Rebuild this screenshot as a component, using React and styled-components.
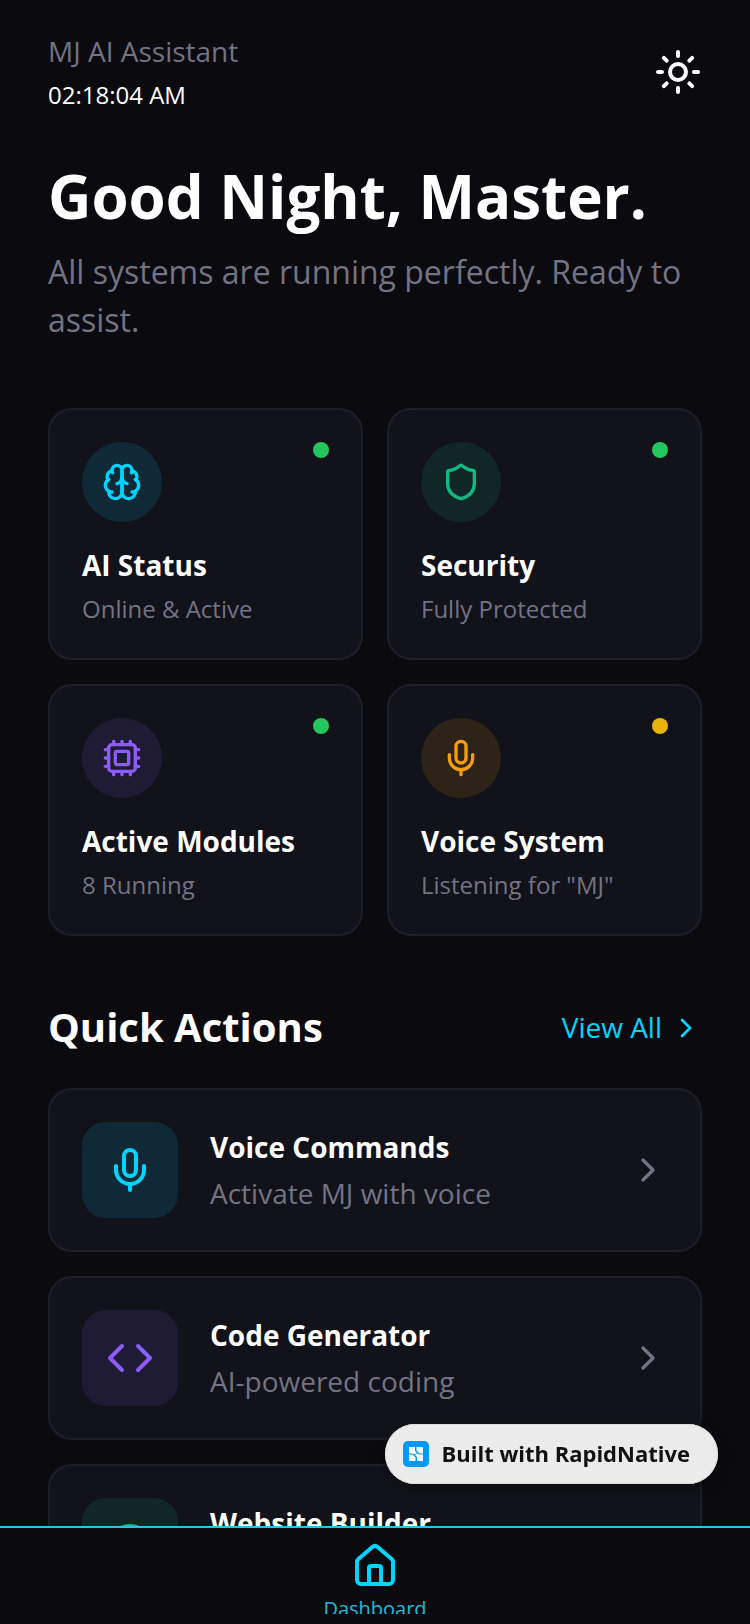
import React from 'react'
import styled, { createGlobalStyle } from 'styled-components'
import {
	Sun,
	Shield,
	Cpu,
	Mic,
	Code,
	Globe,
	House,
	ChevronRight
} from 'lucide-react'

const GlobalStyle = createGlobalStyle`
	* {
		box-sizing: border-box;
	}

	body {
		margin: 0;
		background: #0a0a0f;
		color: #ffffff;
		font-family: "Open Sans", "Noto Sans", sans-serif;
	}

	h1, h2, h3, p {
		margin: 0;
	}

	button {
		font: inherit;
		color: inherit;
		border: 0;
		padding: 0;
		background: none;
		cursor: pointer;
	}
`

const BrainIcon = ({ size = 40 }) => (
	<svg
		width={size}
		height={size}
		viewBox="0 0 24 24"
		fill="none"
		stroke="currentColor"
		strokeWidth="2"
		strokeLinecap="round"
		strokeLinejoin="round"
	>
		<path d="M12 5a3 3 0 1 0-5.997.125 4 4 0 0 0-2.526 5.77 4 4 0 0 0 .556 6.588A4 4 0 1 0 12 18Z" />
		<path d="M12 5a3 3 0 1 1 5.997.125 4 4 0 0 1 2.526 5.77 4 4 0 0 1-.556 6.588A4 4 0 1 1 12 18Z" />
		<path d="M15 13a4.5 4.5 0 0 1-3-4 4.5 4.5 0 0 1-3 4" />
		<path d="M17.599 6.5a3 3 0 0 0 .399-1.375" />
		<path d="M6.003 5.125A3 3 0 0 0 6.401 6.5" />
		<path d="M3.477 10.896a4 4 0 0 1 .585-.396" />
		<path d="M19.938 10.5a4 4 0 0 1 .585.396" />
		<path d="M6 18a4 4 0 0 1-1.967-.516" />
		<path d="M19.967 17.484A4 4 0 0 1 18 18" />
	</svg>
)

const RapidLogo = () => (
	<svg width="26" height="26" viewBox="0 0 26 26">
		<rect width="26" height="26" rx="5" fill="#0099ff" />
		<path
			fill="#ffffff"
			d="M6 6h6v5l-2 1.500H6zM13.500 6H20v6.500h-4l-2.500-3zM6 13.500h4l2.500 3V20H6zM14 20v-4.500l2-2h4V20zM12 10l4 3-2 3-4-3z"
		/>
		<path fill="#0099ff" d="M13.500 9.500 16.500 13h-3zM12.500 16.500 9.500 13h3z" />
	</svg>
)

const statuses = [
	{ title: 'AI Status', text: 'Online & Active', icon: BrainIcon, color: '#00d4ff', dot: '#22c55e' },
	{ title: 'Security', text: 'Fully Protected', icon: Shield, color: '#10b981', dot: '#22c55e' },
	{ title: 'Active Modules', text: '8 Running', icon: Cpu, color: '#8b5cf6', dot: '#22c55e' },
	{ title: 'Voice System', text: 'Listening for "MJ"', icon: Mic, color: '#f59e0b', dot: '#eab308' }
]

const actions = [
	{ title: 'Voice Commands', text: 'Activate MJ with voice', icon: Mic, color: '#00d4ff' },
	{ title: 'Code Generator', text: 'AI-powered coding', icon: Code, color: '#8b5cf6' },
	{ title: 'Website Builder', text: 'Create websites instantly', icon: Globe, color: '#10b981' }
]

const App = () => (
	<Screen>
		<GlobalStyle />
		<Content>
			<Header>
				<div>
					<AppName>MJ AI Assistant</AppName>
					<Time>02:18:04 AM</Time>
				</div>
				<ThemeButton aria-label="Toggle theme">
					<Sun size={48} />
				</ThemeButton>
			</Header>
			<Greeting>Good Night, Master.</Greeting>
			<Intro>All systems are running perfectly. Ready to assist.</Intro>
			<StatusGrid>
				{statuses.map(({ title, text, icon: Icon, color, dot }) => (
					<Card key={title}>
						<CardTop>
							<Circle $color={color}>
								<Icon size={40} />
							</Circle>
							<Dot $color={dot} />
						</CardTop>
						<CardTitle>{title}</CardTitle>
						<CardText>{text}</CardText>
					</Card>
				))}
			</StatusGrid>
			<SectionHeader>
				<SectionTitle>Quick Actions</SectionTitle>
				<ViewAll href="#actions">
					<ViewAllText>View All</ViewAllText>
					<ChevronRight size={32} />
				</ViewAll>
			</SectionHeader>
			<ActionList id="actions">
				{actions.map(({ title, text, icon: Icon, color }) => (
					<Action key={title}>
						<Tile $color={color}>
							<Icon size={48} />
						</Tile>
						<ActionBody>
							<ActionTitle>{title}</ActionTitle>
							<ActionText>{text}</ActionText>
						</ActionBody>
						<Arrow size={40} />
					</Action>
				))}
			</ActionList>
		</Content>
		<Badge href="#rapidnative">
			<RapidLogo />
			<BadgeText>Built with RapidNative</BadgeText>
		</Badge>
		<TabBar>
			<Tab href="#dashboard">
				<House size={48} />
				<TabLabel>Dashboard</TabLabel>
			</Tab>
		</TabBar>
	</Screen>
)

const Screen = styled.div`
	display: flex;
	flex-direction: column;
	height: 100vh;
	overflow: hidden;
`

const Content = styled.main`
	flex: 1;
	min-height: 0;
	overflow: hidden;
	padding: 32px 48px 0;
`

const Header = styled.header`
	display: flex;
	align-items: center;
	justify-content: space-between;
	margin-bottom: 48px;
`

const AppName = styled.p`
	padding-bottom: 10px;
	font-size: 28px;
	line-height: 38px;
	color: #737384;
`

const Time = styled.p`
	padding-bottom: 2px;
	font-size: 24px;
	line-height: 30px;
`

const ThemeButton = styled.button`
	display: flex;
`

const Greeting = styled.h1`
	font-size: 60px;
	line-height: 72px;
	font-weight: 700;
`

const Intro = styled.p`
	padding-top: 16px;
	font-size: 32px;
	line-height: 48px;
	color: #737384;
`

const StatusGrid = styled.section`
	display: grid;
	grid-template-columns: 1fr 1fr;
	gap: 24px;
	padding: 64px 0;
`

const Card = styled.article`
	padding: 32px;
	border: 2px solid #1e1e2a;
	border-radius: 24px;
	background: #12121a;
`

const CardTop = styled.div`
	display: flex;
	align-items: flex-start;
	justify-content: space-between;
	margin-bottom: 24px;
`

const Circle = styled.div`
	display: flex;
	align-items: center;
	justify-content: center;
	width: 80px;
	height: 80px;
	border-radius: 50%;
	color: ${({ $color }) => $color};
	background: ${({ $color }) => $color}20;
`

const Tile = styled(Circle)`
	flex: none;
	width: 96px;
	height: 96px;
	border-radius: 24px;
`

const Dot = styled.span`
	width: 16px;
	height: 16px;
	border-radius: 50%;
	background: ${({ $color }) => $color};
`

const CardTitle = styled.h3`
	padding-bottom: 10px;
	font-size: 28px;
	line-height: 38px;
	font-weight: 700;
`

const CardText = styled.p`
	padding-bottom: 2px;
	font-size: 24px;
	line-height: 30px;
	color: #737384;
`

const SectionHeader = styled.div`
	display: flex;
	align-items: center;
	justify-content: space-between;
	margin-bottom: 32px;
`

const SectionTitle = styled.h2`
	padding-bottom: 2px;
	font-size: 40px;
	line-height: 54px;
	font-weight: 700;
`

const ViewAll = styled.a`
	display: flex;
	align-items: center;
	gap: 8px;
	color: #00d4ff;
	text-decoration: none;
`

const ViewAllText = styled.span`
	padding-bottom: 2px;
	font-size: 28px;
	line-height: 38px;
`

const ActionList = styled.div`
	display: flex;
	flex-direction: column;
	gap: 24px;
`

const Action = styled.button`
	display: flex;
	align-items: center;
	gap: 32px;
	padding: 32px;
	border: 2px solid #1e1e2a;
	border-radius: 24px;
	background: #12121a;
	text-align: left;
`

const ActionBody = styled.span`
	display: flex;
	flex: 1;
	flex-direction: column;
	gap: 6px;
`

const ActionTitle = styled.span`
	font-size: 28px;
	line-height: 40px;
	font-weight: 700;
`

const ActionText = styled.span`
	font-size: 28px;
	line-height: 40px;
	color: #737384;
`

const Arrow = styled(ChevronRight)`
	color: #737384;
`

const Badge = styled.a`
	position: fixed;
	right: 32px;
	bottom: 140px;
	display: flex;
	align-items: center;
	gap: 12px;
	height: 60px;
	padding: 0 28px 0 18px;
	border-radius: 30px;
	background: #ebebeb;
	box-shadow: inset 0 0 0 1px #dedede, 0 4px 16px rgba(0, 0, 0, 0.3);
	color: #111111;
	text-decoration: none;
`

const BadgeText = styled.span`
	padding-bottom: 2px;
	font-size: 22px;
	line-height: 28px;
	font-weight: 700;
`

const TabBar = styled.nav`
	display: flex;
	flex: none;
	justify-content: center;
	height: 98px;
	padding: 14px 0 10px;
	border-top: 2px solid #1ec8ea;
	background: #0a0a0f;
`

const Tab = styled.a`
	display: flex;
	flex-direction: column;
	align-items: center;
	overflow: hidden;
	color: #00d4ff;
	text-decoration: none;

	svg {
		flex: none;
	}
`

const TabLabel = styled.span`
	padding-top: 5px;
	font-size: 20px;
	line-height: 28px;
	color: #22b8da;
`

export default App
